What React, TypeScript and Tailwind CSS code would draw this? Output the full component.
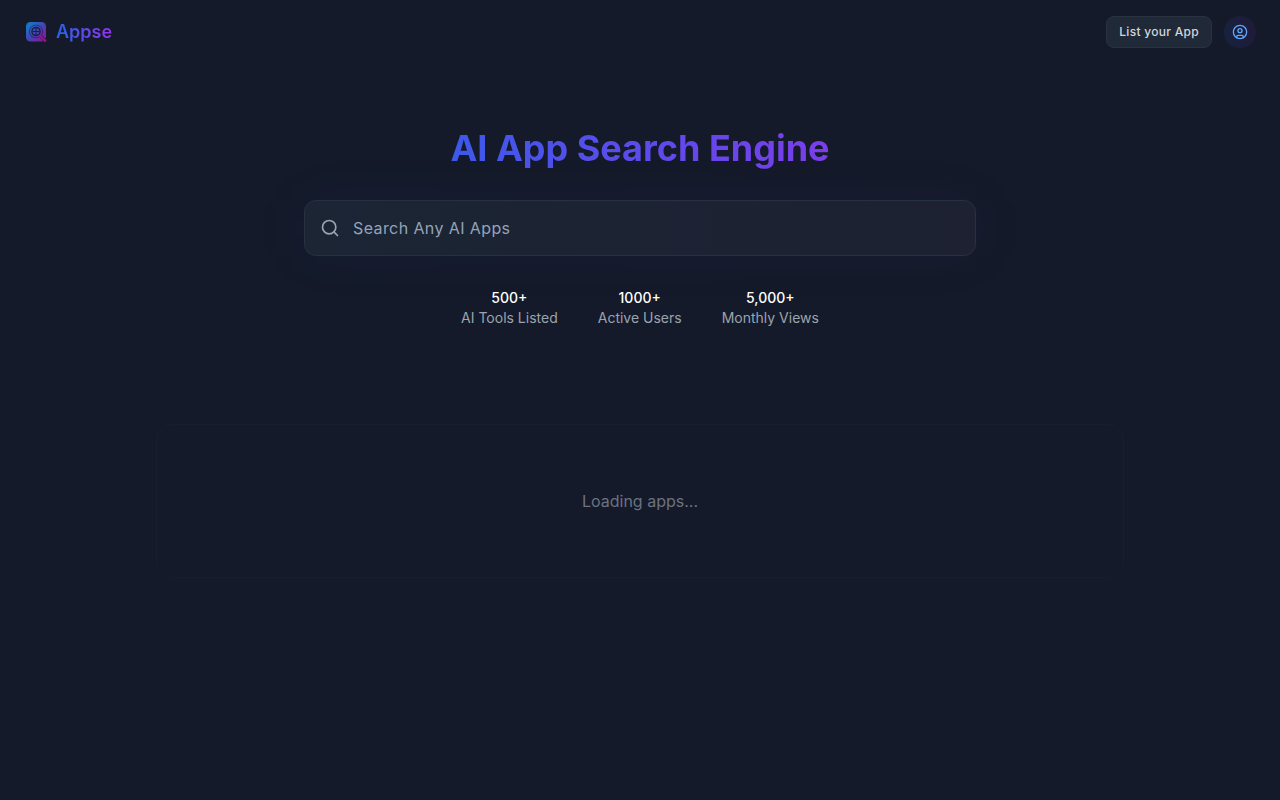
import { CircleUser, Search } from "lucide-react";

const stats = [
  { value: "500+", label: "AI Tools Listed" },
  { value: "1000+", label: "Active Users" },
  { value: "5,000+", label: "Monthly Views" },
];

function Logo() {
  return (
    <svg viewBox="0 0 24 24" className="size-6" aria-hidden="true">
      <defs>
        <linearGradient id="logo-fill" x1="2" y1="2" x2="22" y2="22" gradientUnits="userSpaceOnUse">
          <stop offset="0" stopColor="#0a86cc" />
          <stop offset="0.5" stopColor="#4444b4" />
          <stop offset="1" stopColor="#a00a8c" />
        </linearGradient>
      </defs>
      <rect x="2" y="2" width="20" height="19.5" rx="4.5" fill="url(#logo-fill)" />
      <path d="M17 16.5 22 21.5" stroke="#2a1a4a" strokeWidth="3.2" />
      <circle cx="12" cy="11.5" r="6.8" fill="#16204a" />
      <circle cx="12" cy="11.5" r="5.5" fill="none" stroke="url(#logo-fill)" strokeWidth="1.4" />
      <path d="M16 15.7 21.2 20.9" stroke="#9a1290" strokeWidth="2.2" strokeLinecap="round" />
      <circle cx="12" cy="11.5" r="3.3" fill="url(#logo-fill)" />
      <path d="M12 8v7M8.5 11.5h7" stroke="#16204a" strokeWidth="1" />
    </svg>
  );
}

export default function App() {
  return (
    <div className="min-h-screen bg-[#141a29] font-['Inter',sans-serif] text-white">
      <header className="flex h-16 items-center justify-between px-6">
        <a href="#" className="flex items-center gap-2">
          <Logo />
          <span className="bg-linear-to-r/srgb from-[#2563eb] to-[#9333ea] bg-clip-text text-lg font-semibold text-transparent">
            Appse
          </span>
        </a>
        <div className="flex items-center gap-3">
          <button className="h-8 rounded-lg border border-[#2a3441] bg-[#1f2937] px-3 text-xs font-medium tracking-wide text-[#d1d5db]">
            List your App
          </button>
          <button
            aria-label="Account"
            className="flex size-8 items-center justify-center rounded-full bg-linear-to-r/srgb from-[#16223f] to-[#211a3a] text-[#60a5fa]"
          >
            <CircleUser className="size-4" />
          </button>
        </div>
      </header>

      <main className="px-4">
        <section className="mx-auto flex max-w-2xl flex-col pt-16">
          <h1 className="bg-linear-to-r/srgb from-[#2563eb] to-[#9333ea] bg-clip-text pb-1 text-center text-4xl font-bold text-transparent">
            AI App Search Engine
          </h1>
          <div className="relative mt-7">
            <div className="absolute inset-0 rounded-xl bg-linear-to-r/srgb from-[#2563eb]/5 to-[#9333ea]/5 blur-xl" />
            <label className="relative flex h-14 items-center gap-[13px] rounded-xl border border-[#28313f] bg-linear-to-r/srgb from-[#1b2534] to-[#1d2132] pr-4 pl-[15px]">
              <Search className="size-5 shrink-0 text-[#9ca3af]" />
              <input
                type="search"
                aria-label="Search apps"
                placeholder="Search Any AI Apps"
                className="min-w-0 flex-1 bg-transparent text-base tracking-wide outline-none placeholder:text-[#94a3b8]"
              />
            </label>
          </div>
          <dl className="mt-8 flex justify-center gap-10 text-center text-sm">
            {stats.map((stat) => (
              <div key={stat.label} className="flex flex-col-reverse">
                <dt className="text-[#9ca3af]">{stat.label}</dt>
                <dd className="font-medium">{stat.value}</dd>
              </div>
            ))}
          </dl>
        </section>

        <section className="mx-auto mt-24 max-w-[968px] rounded-2xl border border-[#171e2d] py-16 text-center text-[#6b7280]">
          <p>Loading apps...</p>
        </section>
      </main>
    </div>
  );
}
